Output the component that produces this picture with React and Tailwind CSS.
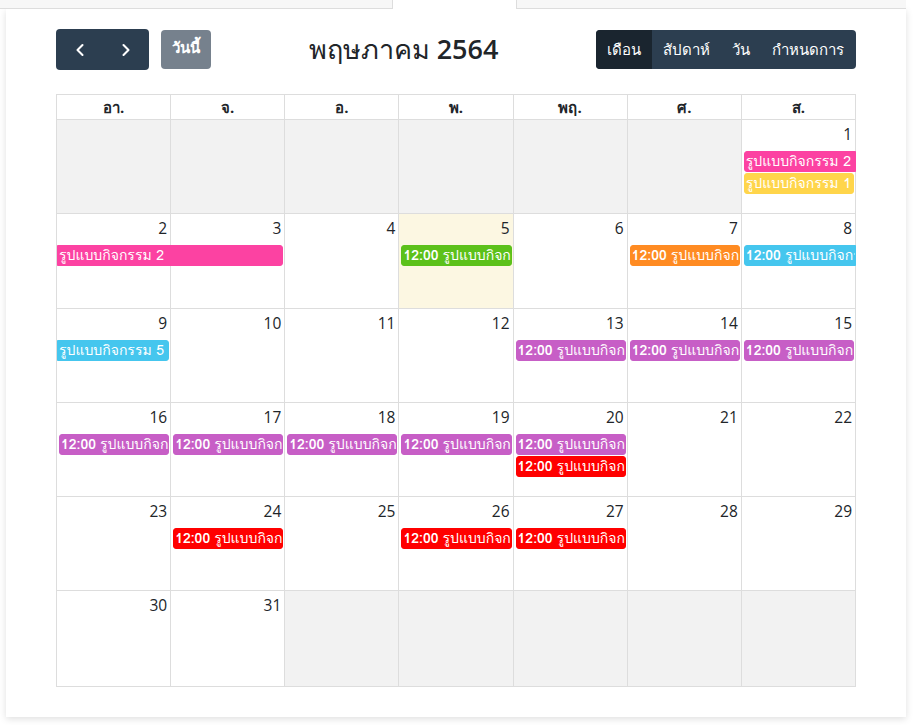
import { ChevronLeft, ChevronRight } from "lucide-react";

const COL_START = [
  "col-start-1",
  "col-start-2",
  "col-start-3",
  "col-start-4",
  "col-start-5",
  "col-start-6",
  "col-start-7",
];
const COL_SPAN = ["col-span-1", "col-span-2"];
const ROW_START = ["row-start-2", "row-start-3"];

const COLORS = {
  pink: "bg-[#fc42a2] border-[#fc42a2]",
  yellow: "bg-[#ffd54b] border-[#ffd54b]",
  green: "bg-[#5cc11a] border-[#5cc11a]",
  orange: "bg-[#ff8b22] border-[#ff8b22]",
  cyan: "bg-[#45c6ee] border-[#45c6ee]",
  purple: "bg-[#c75ec6] border-[#c75ec6]",
  red: "bg-[#ff0000] border-[#ff0000]",
};

const dayNames = ["อา.", "จ.", "อ.", "พ.", "พฤ.", "ศ.", "ส."];

// each week: 7 days (null = other month), plus its events
const weeks = [
  {
    days: [null, null, null, null, null, null, 1],
    events: [
      { col: 7, row: 0, color: "pink", title: "รูปแบบกิจกรรม 2", contRight: true },
      { col: 7, row: 1, color: "yellow", title: "รูปแบบกิจกรรม 1" },
    ],
  },
  {
    days: [2, 3, 4, 5, 6, 7, 8],
    today: 4,
    events: [
      { col: 1, span: 2, row: 0, color: "pink", title: "รูปแบบกิจกรรม 2", contLeft: true },
      { col: 4, row: 0, color: "green", time: "12:00", title: "รูปแบบกิจกรรม 3" },
      { col: 6, row: 0, color: "orange", time: "12:00", title: "รูปแบบกิจกรรม 4" },
      { col: 7, row: 0, color: "cyan", time: "12:00", title: "รูปแบบกิจกรรม 5", contRight: true },
    ],
  },
  {
    days: [9, 10, 11, 12, 13, 14, 15],
    events: [
      { col: 1, row: 0, color: "cyan", title: "รูปแบบกิจกรรม 5", contLeft: true },
      { col: 5, row: 0, color: "purple", time: "12:00", title: "รูปแบบกิจกรรม 6" },
      { col: 6, row: 0, color: "purple", time: "12:00", title: "รูปแบบกิจกรรม 6" },
      { col: 7, row: 0, color: "purple", time: "12:00", title: "รูปแบบกิจกรรม 6" },
    ],
  },
  {
    days: [16, 17, 18, 19, 20, 21, 22],
    events: [
      { col: 1, row: 0, color: "purple", time: "12:00", title: "รูปแบบกิจกรรม 6" },
      { col: 2, row: 0, color: "purple", time: "12:00", title: "รูปแบบกิจกรรม 6" },
      { col: 3, row: 0, color: "purple", time: "12:00", title: "รูปแบบกิจกรรม 6" },
      { col: 4, row: 0, color: "purple", time: "12:00", title: "รูปแบบกิจกรรม 6" },
      { col: 5, row: 0, color: "purple", time: "12:00", title: "รูปแบบกิจกรรม 6" },
      { col: 5, row: 1, color: "red", time: "12:00", title: "รูปแบบกิจกรรม 7" },
    ],
  },
  {
    days: [23, 24, 25, 26, 27, 28, 29],
    events: [
      { col: 2, row: 0, color: "red", time: "12:00", title: "รูปแบบกิจกรรม 7" },
      { col: 4, row: 0, color: "red", time: "12:00", title: "รูปแบบกิจกรรม 7" },
      { col: 5, row: 0, color: "red", time: "12:00", title: "รูปแบบกิจกรรม 7" },
    ],
  },
  {
    days: [30, 31, null, null, null, null, null],
    events: [],
  },
];

function EventChip({ ev }) {
  const edge = [
    ev.contLeft ? "ml-0 rounded-l-none" : "ml-[2px] rounded-l-[3px]",
    ev.contRight ? "mr-0 rounded-r-none" : "mr-[2px] rounded-r-[3px]",
  ].join(" ");
  return (
    <div
      className={`${COL_START[ev.col - 1]} ${COL_SPAN[(ev.span || 1) - 1]} ${ROW_START[ev.row]} ${COLORS[ev.color]} ${edge} z-10 h-[21px] border px-[1px] overflow-hidden whitespace-nowrap text-[14px] leading-[19px] text-white font-["Loma","Garuda","Tahoma","Open_Sans",sans-serif]`}
    >
      {ev.time && <b className="font-bold mr-1">{ev.time}</b>}
      {ev.title}
    </div>
  );
}

function Week({ week, last }) {
  return (
    <div className="grid grid-cols-7 grid-rows-[31px_22px_22px_1fr] h-[94.3px]">
      {week.days.map((d, i) => (
        <div
          key={i}
          className={`${COL_START[i]} row-start-1 row-span-4 border-r border-[#dddddd] ${
            last ? "" : "border-b"
          } ${
            d === null
              ? "bg-[#f2f2f2]"
              : week.today === i + 1
              ? "bg-[#fcf7e2]"
              : "bg-white"
          } text-right pr-[3px] pt-[3px] text-[15.5px] leading-[22px] text-[#212529]`}
        >
          {d}
        </div>
      ))}
      {week.events.map((ev, i) => (
        <EventChip key={i} ev={ev} />
      ))}
    </div>
  );
}

export default function App() {
  return (
    <div
      className="min-h-[725px] bg-white"
      style={{ fontFamily: '"Open Sans", "Noto Sans", "DejaVu Sans", sans-serif' }}
    >
      <div className="flex h-[9px] w-[906px]">
        <div className="w-[393px] bg-[#f7f7f7] border-b border-r border-[#dddddd]" />
        <div className="w-[123px] bg-white" />
        <div className="flex-1 bg-[#f7f7f7] border-b border-l border-[#dddddd]" />
      </div>

      <div className="ml-[6px] w-[900px] bg-white shadow-[0_2px_7px_rgba(0,0,0,0.13)] px-[50px] pt-[20px] pb-[30px]">
        <div className="flex items-center justify-between h-[41px]">
          <div className="flex items-center gap-3">
            <div className="flex h-[41px] rounded-[4px] bg-[#2c3e50] text-white overflow-hidden">
              <button className="w-[47px] flex items-center justify-center">
                <ChevronLeft size={20} strokeWidth={2.5} />
              </button>
              <button className="w-[46px] flex items-center justify-center">
                <ChevronRight size={20} strokeWidth={2.5} />
              </button>
            </div>
            <button className="h-[39px] w-[50px] rounded-[4px] bg-[#76818d] text-white text-[15px] font-semibold pb-1">
              วันนี้
            </button>
          </div>

          <h2 className="text-[27px] text-[#212529] font-normal">
            พฤษภาคม <span className="font-semibold">2564</span>
          </h2>

          <div className="flex h-[39px] rounded-[4px] bg-[#2c3e50] text-white text-[15px] overflow-hidden">
            <button className="w-[56px] bg-[#1a252f]">เดือน</button>
            <button className="w-[69px]">สัปดาห์</button>
            <button className="w-[39px]">วัน</button>
            <button className="w-[96px]">กำหนดการ</button>
          </div>
        </div>

        <div className="mt-[24px] border border-[#dddddd] border-r-0">
          <div className="grid grid-cols-7 h-[25px]">
            {dayNames.map((n) => (
              <div
                key={n}
                className="border-r border-b border-[#dddddd] text-center text-[15px] font-bold leading-[24px] text-[#212529]"
              >
                {n}
              </div>
            ))}
          </div>
          {weeks.map((w, i) => (
            <Week key={i} week={w} last={i === weeks.length - 1} />
          ))}
        </div>
      </div>
    </div>
  );
}
